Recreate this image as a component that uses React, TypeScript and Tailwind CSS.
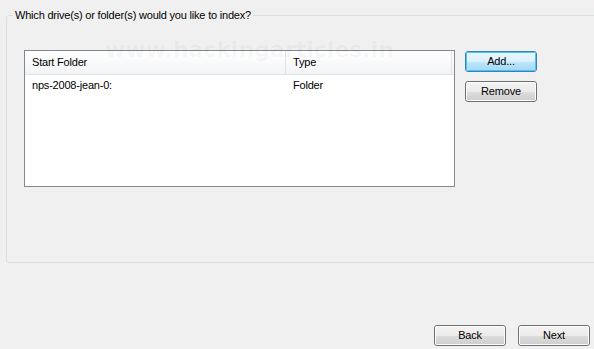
import React from "react";

const font = { fontFamily: '"Liberation Sans", Arial, sans-serif' };

function WinButton({ label, primary }: { label: string; primary?: boolean }) {
  if (primary) {
    return (
      <button
        className="relative w-[72px] h-[21px] rounded-[3px] border border-[#3c7fb1] text-[11px] text-black flex items-center justify-center overflow-hidden"
        style={font}
      >
        <span className="absolute inset-0 flex flex-col rounded-[2px] border border-[#48c4f5]">
          <span className="flex-1 bg-gradient-to-b from-[#eaf6fd] to-[#d9f0fc]" />
          <span className="flex-1 bg-gradient-to-b from-[#bee6fd] to-[#a7d9f5]" />
        </span>
        <span className="relative">{label}</span>
      </button>
    );
  }
  return (
    <button
      className="relative w-[72px] h-[21px] rounded-[3px] border border-[#707070] text-[11px] text-black flex items-center justify-center overflow-hidden"
      style={font}
    >
      <span className="absolute inset-0 flex flex-col rounded-[2px] border border-[#fcfcfc]">
        <span className="flex-1 bg-gradient-to-b from-[#f2f2f2] to-[#ebebeb]" />
        <span className="flex-1 bg-gradient-to-b from-[#dddddd] to-[#cfcfcf]" />
      </span>
      <span className="relative">{label}</span>
    </button>
  );
}

export default function App() {
  return (
    <div
      className="relative w-[594px] h-[349px] bg-[#f0f0f0] overflow-hidden text-[11px] text-black tracking-[-0.2px]"
      style={font}
    >
      <fieldset className="ml-[6px] mt-[9px] w-[600px] h-[254px] border border-[#d5dfe5] rounded-[3px] pl-[17px] pt-[28px]">
        <legend className="-ml-[11px] px-[2px] leading-[13px]">
          Which drive(s) or folder(s) would you like to index?
        </legend>
        <div className="flex gap-[10px]">
          <div className="w-[431px] h-[137px] border border-[#828790] bg-white flex flex-col">
            <div className="h-[24px] flex bg-gradient-to-b from-white to-[#f3f4f6] border-b border-[#e2e3e5]">
              <div className="w-[261px] pl-[7px] flex items-center border-r border-[#e2e3e5]">
                Start Folder
              </div>
              <div className="w-[166px] pl-[7px] flex items-center border-r border-[#e2e3e5]">
                Type
              </div>
            </div>
            <div className="h-[20px] flex items-center">
              <div className="w-[262px] pl-[7px]">nps-2008-jean-0:</div>
              <div className="pl-[6px]">Folder</div>
            </div>
          </div>
          <div className="flex flex-col gap-[9px] pt-[1px]">
            <WinButton label="Add..." primary />
            <WinButton label="Remove" />
          </div>
        </div>
      </fieldset>

      <div className="flex justify-end gap-[12px] pr-[4px] mt-[62px]">
        <WinButton label="Back" />
        <WinButton label="Next" />
      </div>

      <div
        className="absolute left-[105px] top-[33px] text-[22px] font-bold text-black/[0.04] pointer-events-none tracking-normal"
        style={{ fontFamily: '"DejaVu Sans", Verdana, sans-serif' }}
      >
        www.hackingarticles.in
      </div>
    </div>
  );
}
